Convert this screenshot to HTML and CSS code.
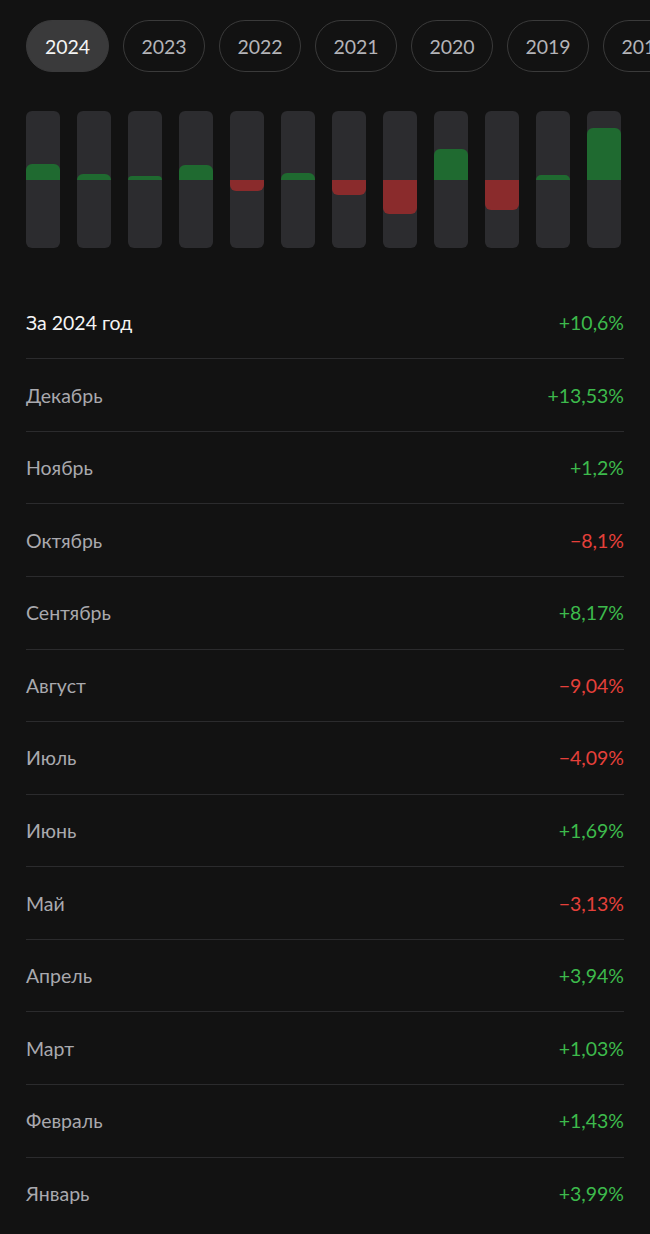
FILE: index.html
```html
<!DOCTYPE html>
<html lang="ru">
<head>
<meta charset="utf-8">
<link rel="stylesheet" href="styles.css">
</head>
<body>
<div class="page">
  <div class="years">
    <div class="pill active">2024</div>
    <div class="pill">2023</div>
    <div class="pill">2022</div>
    <div class="pill">2021</div>
    <div class="pill">2020</div>
    <div class="pill">2019</div>
    <div class="pill">2018</div>
  </div>
  <div class="chart">
    <div class="bar"><div class="half up"><div class="fill pos" style="height:15.2px"></div></div><div class="half down"></div></div>
    <div class="bar"><div class="half up"><div class="fill pos" style="height:5.4px"></div></div><div class="half down"></div></div>
    <div class="bar"><div class="half up"><div class="fill pos" style="height:3.9px"></div></div><div class="half down"></div></div>
    <div class="bar"><div class="half up"><div class="fill pos" style="height:15px"></div></div><div class="half down"></div></div>
    <div class="bar"><div class="half up"></div><div class="half down"><div class="fill neg" style="height:11.9px"></div></div></div>
    <div class="bar"><div class="half up"><div class="fill pos" style="height:6.4px"></div></div><div class="half down"></div></div>
    <div class="bar"><div class="half up"></div><div class="half down"><div class="fill neg" style="height:15.5px"></div></div></div>
    <div class="bar"><div class="half up"></div><div class="half down"><div class="fill neg" style="height:34.3px"></div></div></div>
    <div class="bar"><div class="half up"><div class="fill pos" style="height:31px"></div></div><div class="half down"></div></div>
    <div class="bar"><div class="half up"></div><div class="half down"><div class="fill neg" style="height:30.8px"></div></div></div>
    <div class="bar"><div class="half up"><div class="fill pos" style="height:4.6px"></div></div><div class="half down"></div></div>
    <div class="bar"><div class="half up"><div class="fill pos" style="height:51.4px"></div></div><div class="half down"></div></div>
  </div>
  <div class="list">
    <div class="row total"><span class="label">За 2024 год</span><span class="val pos-t">+10,6%</span></div>
    <div class="row"><span class="label">Декабрь</span><span class="val pos-t">+13,53%</span></div>
    <div class="row"><span class="label">Ноябрь</span><span class="val pos-t">+1,2%</span></div>
    <div class="row"><span class="label">Октябрь</span><span class="val neg-t">−8,1%</span></div>
    <div class="row"><span class="label">Сентябрь</span><span class="val pos-t">+8,17%</span></div>
    <div class="row"><span class="label">Август</span><span class="val neg-t">−9,04%</span></div>
    <div class="row"><span class="label">Июль</span><span class="val neg-t">−4,09%</span></div>
    <div class="row"><span class="label">Июнь</span><span class="val pos-t">+1,69%</span></div>
    <div class="row"><span class="label">Май</span><span class="val neg-t">−3,13%</span></div>
    <div class="row"><span class="label">Апрель</span><span class="val pos-t">+3,94%</span></div>
    <div class="row"><span class="label">Март</span><span class="val pos-t">+1,03%</span></div>
    <div class="row"><span class="label">Февраль</span><span class="val pos-t">+1,43%</span></div>
    <div class="row last"><span class="label">Январь</span><span class="val pos-t">+3,99%</span></div>
  </div>
</div>
</body>
</html>
```

FILE: styles.css
```css
html, body {
  margin: 0;
  padding: 0;
  background: #121212;
}
body {
  font-family: Lato, "Noto Sans", sans-serif;
  height: 1234px;
  overflow: hidden;
}
.page {
  padding: 20px 26px 0 26px;
}
.years {
  display: flex;
  gap: 14px;
  width: 650px;
  overflow: hidden;
}
.pill {
  flex: 0 0 auto;
  box-sizing: border-box;
  width: 82px;
  height: 52px;
  border-radius: 26px;
  border: 1px solid #3a3a3a;
  color: #b4b4b8;
  font-size: 19.5px;
  display: flex;
  align-items: center;
  justify-content: center;
}
.pill.active {
  width: 83px;
  background: #3a3a3b;
  border-color: #3a3a3b;
  color: #f4f4f4;
}
.chart {
  display: flex;
  gap: 17px;
  margin-top: 39px;
  height: 137px;
}
.bar {
  width: 34px;
  height: 137px;
  background: #2c2c2f;
  border-radius: 6px;
  display: flex;
  flex-direction: column;
}
.half {
  height: 68.5px;
  display: flex;
  flex-direction: column;
}
.half.up {
  justify-content: flex-end;
}
.half.down {
  justify-content: flex-start;
}
.fill.pos {
  background: #1f6a30;
  border-radius: 6px 6px 0 0;
}
.fill.neg {
  background: #8a2b2c;
  border-radius: 0 0 6px 6px;
}
.list {
  margin-top: 38.7px;
  width: 598px;
}
.row {
  height: 71.58px;
  border-bottom: 1px solid #2b2b2d;
  display: flex;
  align-items: center;
  justify-content: space-between;
  font-size: 19.5px;
}
.row.last {
  border-bottom: none;
}
.label {
  color: #a9a9ae;
}
.total .label {
  color: #f4f4f4;
}
.pos-t {
  color: #3dba4c;
}
.neg-t {
  color: #e5403a;
}
```
